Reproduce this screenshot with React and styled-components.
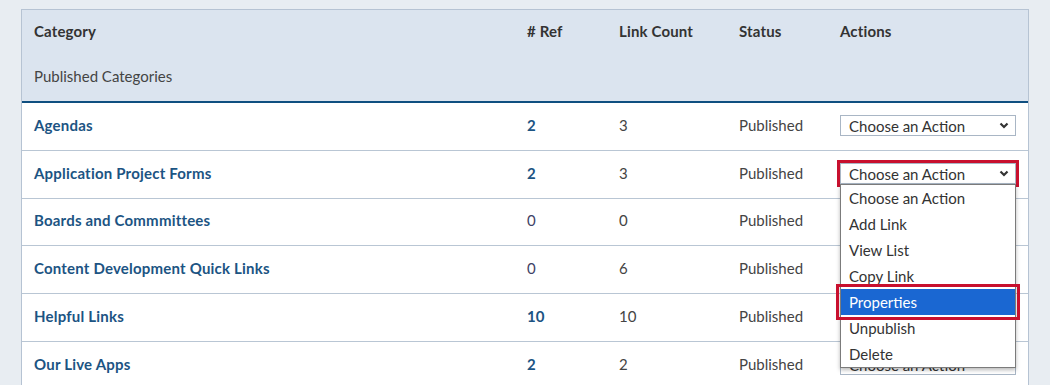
import React from "react";
import styled, { createGlobalStyle } from "styled-components";

const GlobalStyle = createGlobalStyle`
  html, body {
    margin: 0;
    padding: 0;
    background: #e8edf2;
    font-family: "Lato", "Noto Sans", sans-serif;
    color: #444;
  }
`;

const COLUMNS = "493px 92px 120px 101px 1fr";

const Page = styled.div`
  padding: 9px 21px 0;
  height: 385px;
  box-sizing: border-box;
  overflow: hidden;
`;

const Card = styled.div`
  border: 1px solid #b6c3d3;
  border-bottom: none;
  background: #fff;
`;

const Header = styled.div`
  display: grid;
  grid-template-columns: ${COLUMNS};
  background: #dbe4ef;
  border-bottom: 2px solid #0f4f80;
  padding: 11px 0 15px;
`;

const HeaderCell = styled.div`
  padding-left: 12px;
  font-size: 15px;
  line-height: 20px;
  font-weight: 700;
  letter-spacing: 0.15px;
  color: #333;
`;

const SubHeading = styled.div`
  grid-column: 1 / -1;
  margin-top: 25px;
  padding-left: 12px;
  font-size: 15px;
  line-height: 20px;
  color: #444;
`;

const Row = styled.div`
  display: grid;
  grid-template-columns: ${COLUMNS};
  align-items: center;
  height: 47.75px;
  box-sizing: border-box;
  border-bottom: 1px solid #b9c6d4;
`;

const Cell = styled.div`
  padding: 0 0 ${(p) => (p.$control ? "1px" : "3px")} 12px;
  font-size: 15px;
  line-height: 20px;
  color: #444;
`;

const CategoryLink = styled.a`
  color: #1c5483;
  font-weight: 700;
  letter-spacing: 0.2px;
  text-decoration: none;
`;

const RefValue = styled.span`
  color: ${(p) => (p.$bold ? "#1c5483" : "#3f4266")};
  font-weight: ${(p) => (p.$bold ? 700 : 400)};
`;

const SelectWrap = styled.div`
  position: relative;
  width: 176px;
`;

const SelectBox = styled.div`
  display: flex;
  align-items: center;
  justify-content: space-between;
  height: 21px;
  box-sizing: border-box;
  padding: 0 6px 0 8px;
  border: 1px solid #a9b6c5;
  background: #fff;
  font-size: 15px;
  color: #333;
  outline: ${(p) => (p.$flagged ? "3px solid #c8102e" : "none")};
`;

const Menu = styled.ul`
  position: absolute;
  top: 100%;
  left: 0;
  right: 0;
  z-index: 5;
  margin: 0;
  padding: 0;
  list-style: none;
  background: #fff;
  border: 1px solid #7b7b7b;
  box-shadow: 0 2px 4px rgba(0, 0, 0, 0.28);
`;

const MenuItem = styled.li`
  height: 26px;
  line-height: 26px;
  padding-left: 8px;
  font-size: 15px;
  color: ${(p) => (p.$selected ? "#fff" : "#333")};
  background: ${(p) => (p.$selected ? "#1a67d2" : "transparent")};
  outline: ${(p) => (p.$flagged ? "3px solid #c8102e" : "none")};
  outline-offset: 2px;
`;

const Chevron = () => (
  <svg width="10" height="7" viewBox="0 0 10 7">
    <path d="M1.5 1.5 L5 5 L8.5 1.5" fill="none" stroke="#333" strokeWidth="2.2" />
  </svg>
);

const actions = ["Choose an Action", "Add Link", "View List", "Copy Link", "Properties", "Unpublish", "Delete"];

const categories = [
  { name: "Agendas", ref: 2, count: 3 },
  { name: "Application Project Forms", ref: 2, count: 3, open: true },
  { name: "Boards and Commmittees", ref: 0, count: 0 },
  { name: "Content Development Quick Links", ref: 0, count: 6 },
  { name: "Helpful Links", ref: 10, count: 10 },
  { name: "Our Live Apps", ref: 2, count: 2 },
];

const ActionSelect = ({ open }) => (
  <SelectWrap>
    <SelectBox $flagged={open}>
      <span>Choose an Action</span>
      <Chevron />
    </SelectBox>
    {open && (
      <Menu>
        {actions.map((a) => (
          <MenuItem key={a} $selected={a === "Properties"} $flagged={a === "Properties"}>
            {a}
          </MenuItem>
        ))}
      </Menu>
    )}
  </SelectWrap>
);

export default function App() {
  return (
    <>
      <GlobalStyle />
      <Page>
        <Card>
          <Header>
            <HeaderCell>Category</HeaderCell>
            <HeaderCell># Ref</HeaderCell>
            <HeaderCell>Link Count</HeaderCell>
            <HeaderCell>Status</HeaderCell>
            <HeaderCell>Actions</HeaderCell>
            <SubHeading>Published Categories</SubHeading>
          </Header>
          {categories.map((c) => (
            <Row key={c.name}>
              <Cell>
                <CategoryLink href="#">{c.name}</CategoryLink>
              </Cell>
              <Cell>
                <RefValue $bold={c.ref > 0}>{c.ref}</RefValue>
              </Cell>
              <Cell>{c.count}</Cell>
              <Cell>Published</Cell>
              <Cell $control>
                <ActionSelect open={c.open} />
              </Cell>
            </Row>
          ))}
        </Card>
      </Page>
    </>
  );
}
